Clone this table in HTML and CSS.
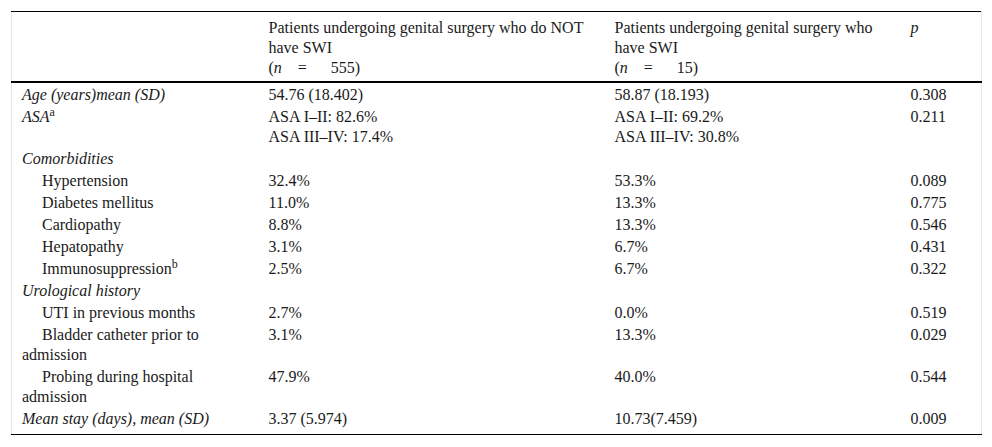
FILE: index.html
```html
<!DOCTYPE html>
<html>
<head>
<meta charset="utf-8">
<link rel="stylesheet" href="styles.css">
</head>
<body>
<div class="wrap">
<table class="data">
<colgroup>
<col class="c1"><col class="c2"><col class="c3"><col class="c4">
</colgroup>
<thead>
<tr>
<th></th>
<th>Patients undergoing genital surgery who do NOT have SWI<br>(<i>n</i><span class="eq">=</span>555)</th>
<th>Patients undergoing genital surgery who have SWI<br>(<i>n</i><span class="eq">=</span>15)</th>
<th><i>p</i></th>
</tr>
</thead>
<tbody>
<tr class="first"><td><i>Age (years)mean (SD)</i></td><td>54.76 (18.402)</td><td>58.87 (18.193)</td><td>0.308</td></tr>
<tr><td><i>ASA</i><sup>a</sup></td><td>ASA I–II: 82.6%<br>ASA III–IV: 17.4%</td><td>ASA I–II: 69.2%<br>ASA III–IV: 30.8%</td><td>0.211</td></tr>
<tr><td><i>Comorbidities</i></td><td></td><td></td><td></td></tr>
<tr><td class="ind">Hypertension</td><td>32.4%</td><td>53.3%</td><td>0.089</td></tr>
<tr><td class="ind">Diabetes mellitus</td><td>11.0%</td><td>13.3%</td><td>0.775</td></tr>
<tr><td class="ind">Cardiopathy</td><td>8.8%</td><td>13.3%</td><td>0.546</td></tr>
<tr><td class="ind">Hepatopathy</td><td>3.1%</td><td>6.7%</td><td>0.431</td></tr>
<tr><td class="ind">Immunosuppression<sup>b</sup></td><td>2.5%</td><td>6.7%</td><td>0.322</td></tr>
<tr><td><i>Urological history</i></td><td></td><td></td><td></td></tr>
<tr><td class="ind">UTI in previous months</td><td>2.7%</td><td>0.0%</td><td>0.519</td></tr>
<tr><td class="ind">Bladder catheter prior to admission</td><td>3.1%</td><td>13.3%</td><td>0.029</td></tr>
<tr><td class="ind">Probing during hospital admission</td><td>47.9%</td><td>40.0%</td><td>0.544</td></tr>
<tr class="last"><td><i>Mean stay (days), mean (SD)</i></td><td>3.37 (5.974)</td><td>10.73(7.459)</td><td>0.009</td></tr>
</tbody>
</table>
</div>
</body>
</html>
```
FILE: styles.css
```css
html, body {
  margin: 0;
  padding: 0;
  background: #fff;
}
.wrap {
  padding: 11px 11px 0 11px;
}
.data {
  width: 970px;
  table-layout: fixed;
  border-collapse: collapse;
  font-family: "Liberation Serif", "Times New Roman", serif;
  font-size: 16px;
  line-height: 20px;
  color: #1a1a1a;
  border-left: 1px solid #e6e6e6;
  border-right: 1px solid #e6e6e6;
  border-top: 1px solid #000;
  border-bottom: 1px solid #000;
}
.c1 { width: 247px; }
.c2 { width: 346px; }
.c3 { width: 296px; }
.c4 { width: 81px; }
.data th {
  font-weight: normal;
  text-align: left;
  vertical-align: top;
  padding: 6px 10px 3px 10px;
  border-bottom: 2px solid #000;
}
.data td {
  text-align: left;
  vertical-align: top;
  padding: 1px 10px;
}
.data tr.first td {
  padding-top: 2px;
}
.data td.ind {
  text-indent: 20px;
}
.data tr.last td {
  padding-bottom: 5px;
}
.eq {
  display: inline-block;
  margin: 0 24px 0 16px;
}
sup {
  font-size: 12px;
  line-height: 0;
  vertical-align: 6px;
}
```
